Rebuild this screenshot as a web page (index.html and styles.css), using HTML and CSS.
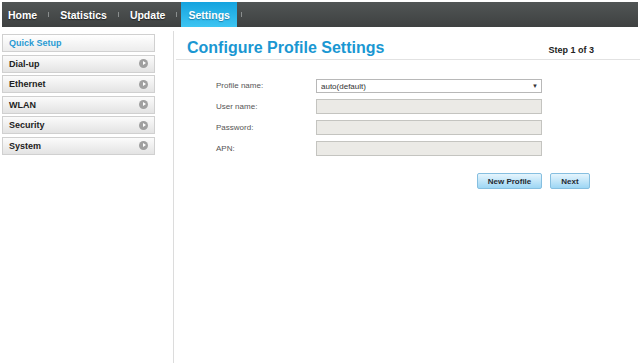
FILE: index.html
```html
<!DOCTYPE html>
<html lang="en">
<head>
  <meta charset="UTF-8" />
  <title>Settings - Quick Setup</title>
  <link rel="stylesheet" href="styles.css">
</head>
<body>
  <nav class="topbar">
    <a class="tab">Home</a><span class="sep"></span>
    <a class="tab">Statistics</a><span class="sep"></span>
    <a class="tab">Update</a><span class="sep"></span>
    <a class="tab active">Settings</a><span class="sep"></span>
  </nav>

  <div class="layout">
    <ul class="sidebar">
      <li class="side-item current">Quick Setup</li>
      <li class="side-item">Dial-up <span class="arrow"></span></li>
      <li class="side-item">Ethernet <span class="arrow"></span></li>
      <li class="side-item">WLAN <span class="arrow"></span></li>
      <li class="side-item">Security <span class="arrow"></span></li>
      <li class="side-item">System <span class="arrow"></span></li>
    </ul>

    <main class="content">
      <div class="page-head">
        <h1>Configure Profile Settings</h1>
        <span class="step">Step 1 of 3</span>
      </div>

      <form class="profile-form">
        <label for="profile">Profile name:</label>
        <span class="select-wrap">
          <select id="profile">
            <option>auto(default)</option>
          </select>
        </span>

        <label for="user">User name:</label>
        <input type="text" id="user" disabled>

        <label for="pass">Password:</label>
        <input type="password" id="pass" disabled>

        <label for="apn">APN:</label>
        <input type="text" id="apn" disabled>
      </form>

      <div class="actions">
        <button type="button" class="btn">New Profile</button>
        <button type="button" class="btn">Next</button>
      </div>
    </main>
  </div>
</body>
</html>
```

FILE: styles.css
```css
body {
  margin: 0;
  font-family: 'Liberation Sans', Arial, sans-serif;
  background: #fff;
  color: #333;
}
.topbar {
  margin: 2px 2px 0;
  height: 25px;
  display: flex;
  align-items: stretch;
  background: linear-gradient(#515555, #3e4141);
}
.topbar .tab {
  display: flex;
  align-items: center;
  padding: 0 7px;
  font-size: 10.5px;
  font-weight: bold;
  color: #fff;
  text-shadow: 0 1px 1px rgba(0, 0, 0, 0.5);
  cursor: pointer;
}
.topbar .tab:first-child {
  padding-left: 6px;
}
.topbar .tab.active {
  background: linear-gradient(#14a3df, #3ec5f2);
  text-shadow: 0 1px 1px rgba(0, 60, 100, 0.5);
}
.topbar .sep {
  width: 1px;
  height: 5px;
  margin: 0 4px;
  align-self: center;
  background: #8a8e8e;
}
.layout {
  display: flex;
  margin-top: 4px;
  min-height: 332px;
}
.sidebar {
  list-style: none;
  margin: 3px 18px 0 2px;
  padding: 0;
  width: 153px;
  display: flex;
  flex-direction: column;
  gap: 2.6px;
}
.side-item {
  box-sizing: border-box;
  height: 18px;
  display: flex;
  align-items: center;
  justify-content: space-between;
  padding: 0 6px;
  border: 1px solid #d0d0d0;
  background: linear-gradient(#fbfbfb, #e3e3e3);
  font-size: 9px;
  font-weight: bold;
  color: #222;
}
.side-item.current {
  background: linear-gradient(#ffffff, #ececec);
  color: #2a9ad3;
}
.side-item .arrow {
  position: relative;
  width: 9px;
  height: 9px;
  border-radius: 50%;
  background: #a0a0a0;
}
.side-item .arrow::after {
  content: '';
  position: absolute;
  left: 3.5px;
  top: 2px;
  border-left: 3px solid #fff;
  border-top: 2.5px solid transparent;
  border-bottom: 2.5px solid transparent;
}
.content {
  flex: 1;
  border-left: 1px solid #dcdcdc;
}
.page-head {
  display: flex;
  justify-content: space-between;
  align-items: baseline;
  margin-left: 2px;
  padding: 8px 46px 2px 11px;
  border-bottom: 1px solid #e2e2e2;
}
.page-head h1 {
  margin: 0;
  font-size: 16px;
  line-height: 18px;
  color: #1a97d2;
}
.page-head .step {
  font-size: 9px;
  font-weight: bold;
  color: #222;
}
.profile-form {
  display: grid;
  grid-template-columns: 100px 226px;
  row-gap: 6px;
  align-items: center;
  padding: 19px 0 0 42px;
}
.profile-form label {
  font-size: 8px;
  line-height: 10px;
  color: #555;
}
.profile-form input {
  display: block;
  box-sizing: border-box;
  width: 226px;
  height: 15px;
  margin: 0;
  border: 1px solid #c4c4c0;
  background: #ebeae6;
}
.select-wrap {
  position: relative;
  display: block;
  height: 14px;
}
.select-wrap select {
  display: block;
  appearance: none;
  box-sizing: border-box;
  width: 226px;
  height: 14px;
  margin: 0;
  padding: 0 4px;
  border: 1px solid #b8b8b8;
  border-radius: 0;
  background: #fff;
  font-family: 'Liberation Sans', Arial, sans-serif;
  font-size: 8px;
  color: #333;
}
.select-wrap::after {
  content: '\25BC';
  position: absolute;
  right: 4px;
  top: 3px;
  font-size: 6px;
  line-height: 8px;
  color: #333;
  pointer-events: none;
}
.actions {
  display: flex;
  gap: 8px;
  padding: 17px 0 0 303px;
}
.btn {
  box-sizing: border-box;
  height: 16px;
  padding: 0;
  border: 1px solid #86bfe0;
  border-radius: 2px;
  background: linear-gradient(#e6f5fd, #9dd6f4);
  font-family: 'Liberation Sans', Arial, sans-serif;
  font-size: 8px;
  font-weight: bold;
  color: #1f2a33;
  cursor: pointer;
}
.btn:first-child {
  width: 65px;
}
.btn:last-child {
  width: 40px;
}
```
